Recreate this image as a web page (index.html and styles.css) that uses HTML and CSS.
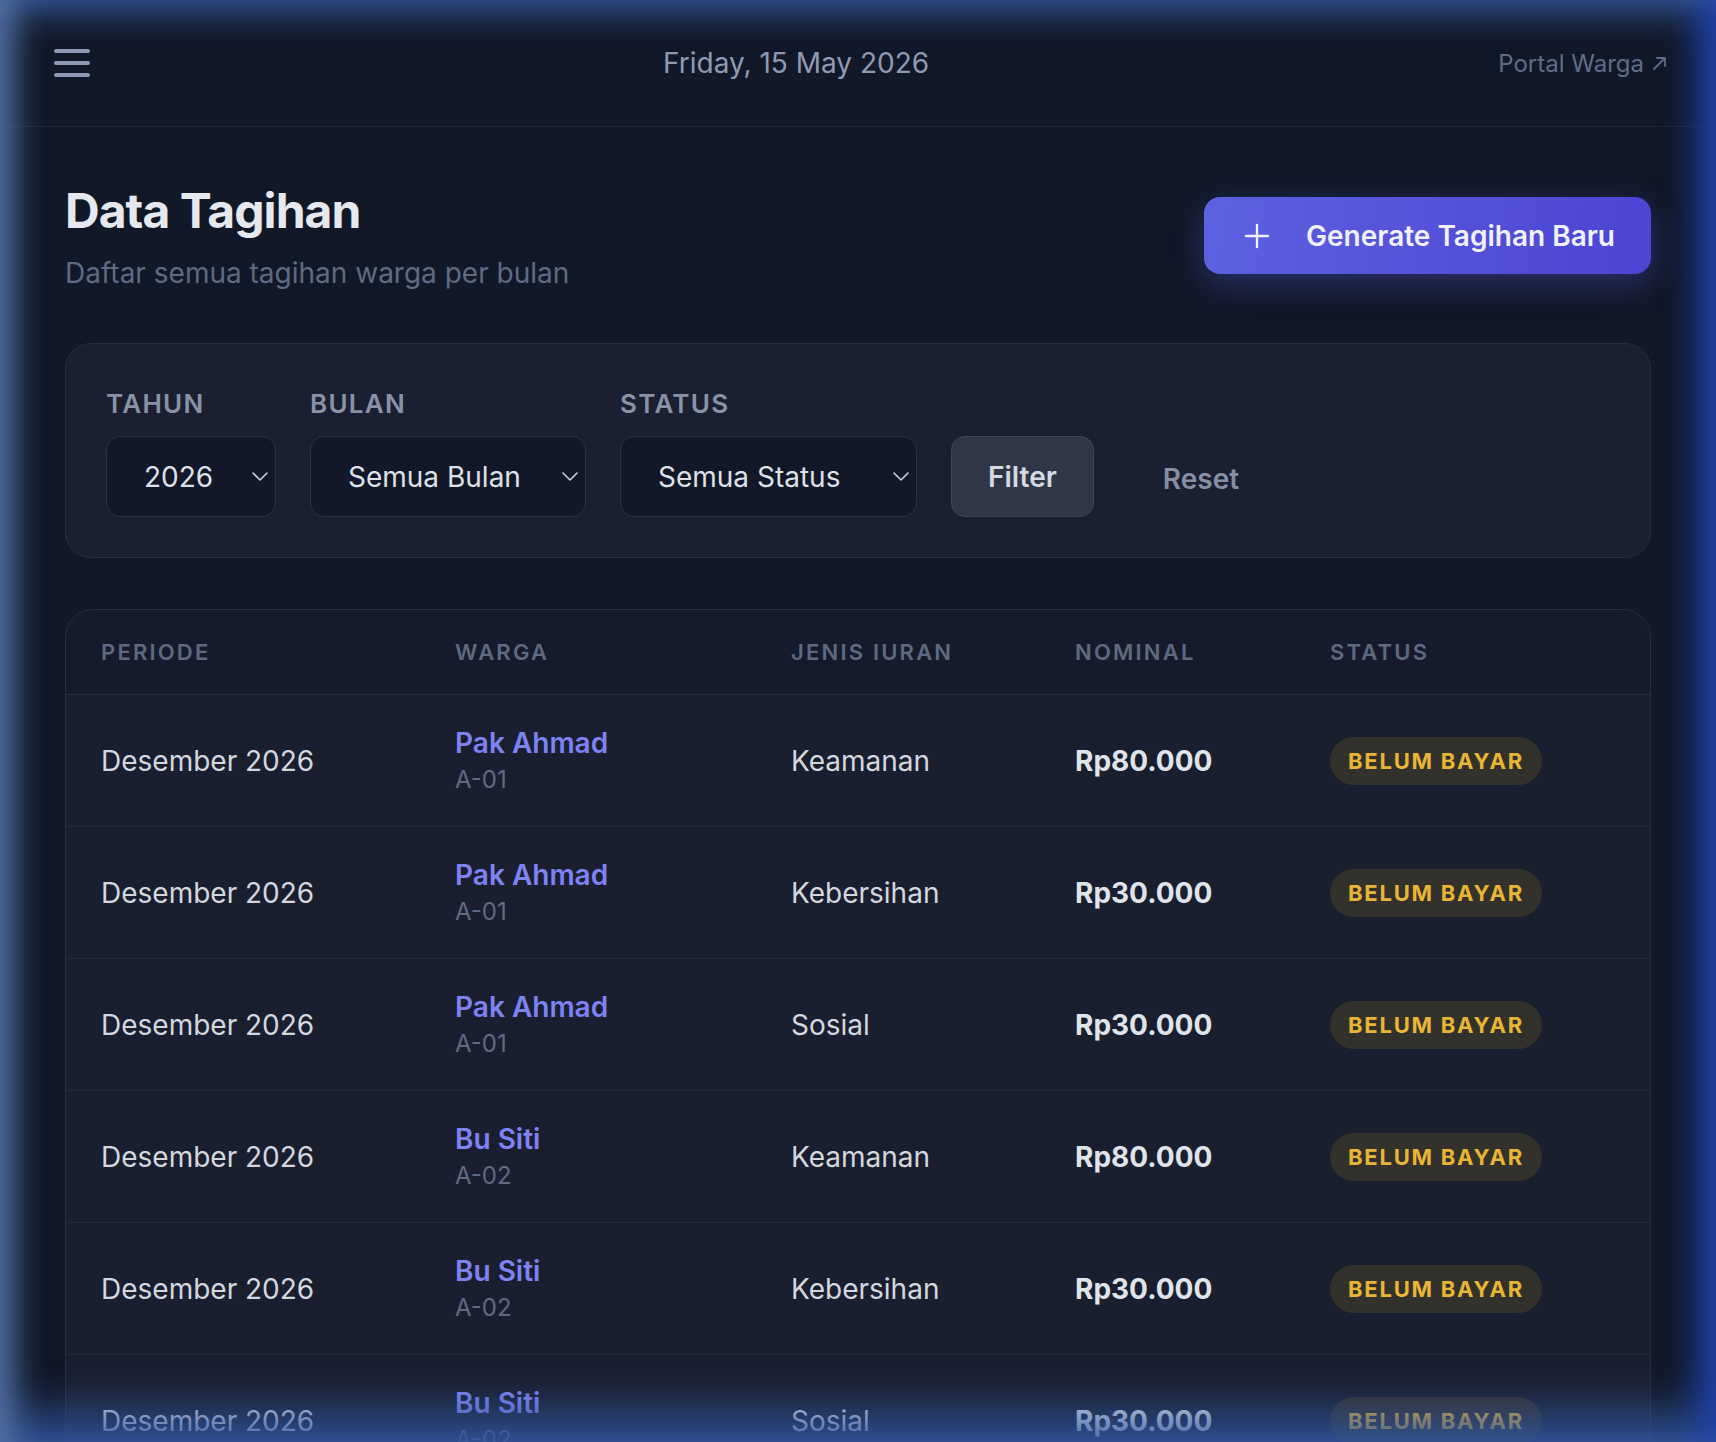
FILE: index.html
```html
<!DOCTYPE html>
<html lang="id">
<head>
    <meta charset="UTF-8">
    <meta name="viewport" content="width=device-width, initial-scale=1.0">
    <title>Data Tagihan</title>
    <link rel="stylesheet" href="styles.css">
</head>
<body>
    <header class="topbar">
        <button class="menu-btn" type="button" aria-label="Menu">
            <span></span><span></span><span></span>
        </button>
        <div class="today">Friday, 15 May 2026</div>
        <a class="portal-link" href="#">Portal Warga
            <svg width="15" height="15" viewBox="0 0 15 15" fill="none" stroke="currentColor" stroke-width="1.8" stroke-linecap="round" stroke-linejoin="round"><path d="M2 13L13 2M5 2h8v8"/></svg>
        </a>
    </header>

    <main class="content">
        <div class="page-head">
            <div>
                <h1>Data Tagihan</h1>
                <p class="subtitle">Daftar semua tagihan warga per bulan</p>
            </div>
            <button class="btn-primary" type="button">
                <svg width="26" height="26" viewBox="0 0 26 26" fill="none" stroke="currentColor" stroke-width="2.4" stroke-linecap="round"><path d="M13 2v22M2 13h22"/></svg>
                Generate Tagihan Baru
            </button>
        </div>

        <form class="filter-card" onsubmit="return false">
            <div class="field">
                <label for="tahun">Tahun</label>
                <div class="select-wrap year">
                    <select id="tahun"><option>2026</option><option>2025</option></select>
                    <svg class="chev" width="16" height="9" viewBox="0 0 16 9" fill="none" stroke="currentColor" stroke-width="1.6" stroke-linecap="round" stroke-linejoin="round"><path d="M1 1l7 7 7-7"/></svg>
                </div>
            </div>
            <div class="field">
                <label for="bulan">Bulan</label>
                <div class="select-wrap month">
                    <select id="bulan"><option>Semua Bulan</option><option>Januari</option><option>Desember</option></select>
                    <svg class="chev" width="16" height="9" viewBox="0 0 16 9" fill="none" stroke="currentColor" stroke-width="1.6" stroke-linecap="round" stroke-linejoin="round"><path d="M1 1l7 7 7-7"/></svg>
                </div>
            </div>
            <div class="field">
                <label for="status">Status</label>
                <div class="select-wrap status">
                    <select id="status"><option>Semua Status</option><option>Belum Bayar</option><option>Lunas</option></select>
                    <svg class="chev" width="16" height="9" viewBox="0 0 16 9" fill="none" stroke="currentColor" stroke-width="1.6" stroke-linecap="round" stroke-linejoin="round"><path d="M1 1l7 7 7-7"/></svg>
                </div>
            </div>
            <button class="btn-filter" type="submit">Filter</button>
            <a class="btn-reset" href="#">Reset</a>
        </form>

        <div class="table-card">
            <table class="bill-table">
                <colgroup>
                    <col style="width: 354px">
                    <col style="width: 336px">
                    <col style="width: 284px">
                    <col style="width: 255px">
                    <col>
                </colgroup>
                <thead>
                    <tr>
                        <th>Periode</th>
                        <th>Warga</th>
                        <th>Jenis Iuran</th>
                        <th>Nominal</th>
                        <th>Status</th>
                    </tr>
                </thead>
                <tbody>
                    <tr>
                        <td>Desember 2026</td>
                        <td><a class="resident" href="#">Pak Ahmad</a><div class="unit">A-01</div></td>
                        <td>Keamanan</td>
                        <td class="amount">Rp80.000</td>
                        <td><span class="badge">Belum Bayar</span></td>
                    </tr>
                    <tr>
                        <td>Desember 2026</td>
                        <td><a class="resident" href="#">Pak Ahmad</a><div class="unit">A-01</div></td>
                        <td>Kebersihan</td>
                        <td class="amount">Rp30.000</td>
                        <td><span class="badge">Belum Bayar</span></td>
                    </tr>
                    <tr>
                        <td>Desember 2026</td>
                        <td><a class="resident" href="#">Pak Ahmad</a><div class="unit">A-01</div></td>
                        <td>Sosial</td>
                        <td class="amount">Rp30.000</td>
                        <td><span class="badge">Belum Bayar</span></td>
                    </tr>
                    <tr>
                        <td>Desember 2026</td>
                        <td><a class="resident" href="#">Bu Siti</a><div class="unit">A-02</div></td>
                        <td>Keamanan</td>
                        <td class="amount">Rp80.000</td>
                        <td><span class="badge">Belum Bayar</span></td>
                    </tr>
                    <tr>
                        <td>Desember 2026</td>
                        <td><a class="resident" href="#">Bu Siti</a><div class="unit">A-02</div></td>
                        <td>Kebersihan</td>
                        <td class="amount">Rp30.000</td>
                        <td><span class="badge">Belum Bayar</span></td>
                    </tr>
                    <tr>
                        <td>Desember 2026</td>
                        <td><a class="resident" href="#">Bu Siti</a><div class="unit">A-02</div></td>
                        <td>Sosial</td>
                        <td class="amount">Rp30.000</td>
                        <td><span class="badge">Belum Bayar</span></td>
                    </tr>
                </tbody>
            </table>
        </div>
    </main>

    <div class="edge-glow"></div>
</body>
</html>
```

FILE: styles.css
```css
html {
    overflow: hidden;
}

body {
    margin: 0;
    background-color: #111827;
    color: #d1d5db;
    font-family: Inter, 'Noto Sans', 'Liberation Sans', sans-serif;
}

/* top bar */
.topbar {
    height: 126px;
    display: flex;
    align-items: center;
    justify-content: space-between;
    padding: 0 49px 0 54px;
    background-color: #111827;
    border-bottom: 1px solid #1e2535;
}

.menu-btn {
    display: flex;
    flex-direction: column;
    gap: 8.5px;
    padding: 0;
    background: none;
    border: none;
    cursor: pointer;
}

.menu-btn span {
    display: block;
    width: 36px;
    height: 3.5px;
    border-radius: 2px;
    background-color: #8e9ab3;
}

.today {
    font-size: 28px;
    color: #8f9bb2;
    margin-left: 4px;
}

.portal-link {
    display: flex;
    align-items: center;
    gap: 8px;
    font-size: 24px;
    color: #5f6d85;
    text-decoration: none;
}

/* page */
.content {
    padding: 55px 65px 0;
}

.page-head {
    display: flex;
    justify-content: space-between;
    align-items: flex-start;
    margin-bottom: 51px;
}

.page-head h1 {
    margin: 0;
    font-size: 48px;
    line-height: 58px;
    font-weight: 700;
    letter-spacing: -0.02em;
    color: #e5e9ef;
}

.subtitle {
    margin: 14px 0 0;
    font-size: 28px;
    line-height: 38px;
    color: #5f6b80;
}

.btn-primary {
    display: flex;
    align-items: center;
    gap: 36px;
    height: 77px;
    margin-top: 15px;
    padding: 0 36px 0 40px;
    border: none;
    border-radius: 16px;
    background: linear-gradient(100deg, #5d61df 0%, #4b44d4 100%);
    box-shadow: 0 10px 32px rgba(88, 90, 230, 0.35);
    color: #f1f1fb;
    font-family: inherit;
    font-size: 28px;
    font-weight: 600;
    cursor: pointer;
}

/* filter */
.filter-card {
    display: flex;
    align-items: flex-end;
    gap: 34px;
    padding: 42px 42px 40px 40px;
    margin-bottom: 51px;
    background-color: #1a2030;
    border: 1px solid #272e3e;
    border-radius: 26px;
}

.field label {
    display: block;
    margin-bottom: 14px;
    font-size: 26px;
    line-height: 36px;
    font-weight: 600;
    letter-spacing: 0.05em;
    text-transform: uppercase;
    color: #8993a6;
}

.select-wrap {
    position: relative;
}

.select-wrap.year { width: 170px; }
.select-wrap.month { width: 276px; }
.select-wrap.status { width: 297px; }

.select-wrap select {
    width: 100%;
    height: 81px;
    padding: 0 40px 0 37px;
    -webkit-appearance: none;
    appearance: none;
    background-color: #121828;
    border: 1px solid #2a3243;
    border-radius: 14px;
    color: #dde1e8;
    font-family: inherit;
    font-size: 28px;
    outline: none;
}

.select-wrap .chev {
    position: absolute;
    right: 8px;
    top: 36px;
    color: #c9ced8;
    pointer-events: none;
}

.btn-filter {
    height: 81px;
    padding: 0 36px;
    background-color: #2f3747;
    border: 1px solid #3d4657;
    border-radius: 14px;
    color: #d5d9e1;
    font-family: inherit;
    font-size: 28px;
    font-weight: 600;
    cursor: pointer;
}

.btn-reset {
    height: 81px;
    display: flex;
    align-items: center;
    padding: 4px 0 0 35px;
    box-sizing: border-box;
    color: #8790a2;
    font-size: 28px;
    font-weight: 600;
    text-decoration: none;
}

/* table */
.table-card {
    background-color: #1a1f30;
    border: 1px solid #272e3e;
    border-radius: 28px;
    overflow: hidden;
}

.bill-table {
    width: 100%;
    border-collapse: collapse;
    table-layout: fixed;
}

.bill-table th {
    height: 84px;
    padding: 0 0 0 35px;
    text-align: left;
    background-color: #151b2a;
    border-bottom: 1px solid #252c3c;
    font-size: 22px;
    font-weight: 600;
    letter-spacing: 0.1em;
    text-transform: uppercase;
    color: #5e6a7f;
}

.bill-table td {
    height: 131px;
    padding: 0 0 0 35px;
    border-bottom: 1px solid #232a3a;
    font-size: 28px;
    color: #d3d7de;
    vertical-align: middle;
}

.resident {
    display: block;
    font-weight: 600;
    line-height: 36px;
    color: #7e83f4;
    text-decoration: none;
}

.unit {
    margin-top: 2px;
    font-size: 24px;
    line-height: 34px;
    color: #5f6b80;
}

.amount {
    font-weight: 700;
}

.bill-table td.amount {
    color: #dfe3ea;
}

.badge {
    display: inline-block;
    height: 48px;
    line-height: 48px;
    padding: 0 18px;
    border-radius: 999px;
    background-color: rgba(234, 179, 8, 0.12);
    color: #e9b534;
    font-size: 22px;
    font-weight: 700;
    letter-spacing: 0.08em;
    text-transform: uppercase;
}

/* bluish glow around the screen edges */
.edge-glow {
    position: fixed;
    inset: 0;
    pointer-events: none;
    box-shadow:
        inset 30px 0 30px -14px rgba(88, 118, 168, 0.85),
        inset -34px 0 34px -14px rgba(30, 66, 170, 0.9),
        inset 0 30px 34px -14px rgba(52, 84, 140, 0.85),
        inset 0 -46px 46px -16px rgba(52, 88, 160, 0.85);
}
```
